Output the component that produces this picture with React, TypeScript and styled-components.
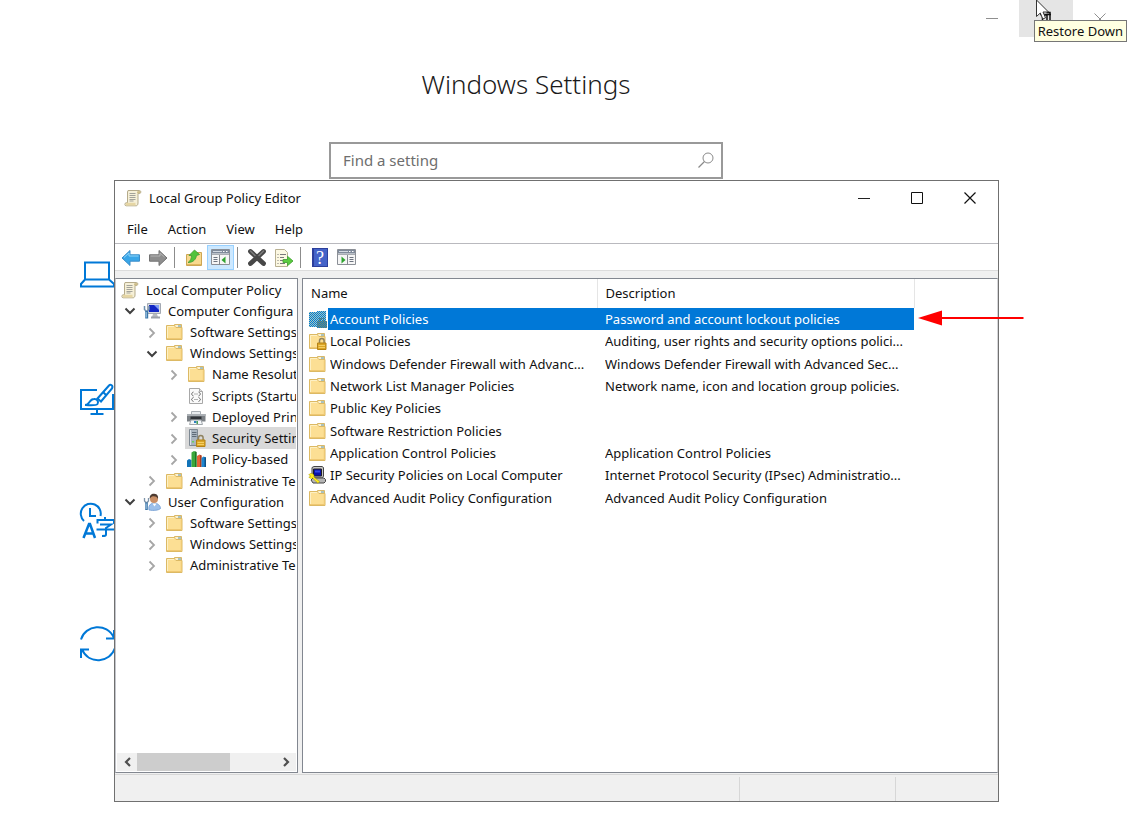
import React from 'react';
import styled, { createGlobalStyle, css } from 'styled-components';

const GlobalStyle = createGlobalStyle`
  *, *::before, *::after { box-sizing: border-box; }
  body {
    margin: 0;
    background: #fff;
    color: #111;
    font-family: 'Noto Sans', 'Open Sans', sans-serif;
    font-size: 13px;
    line-height: 20px;
  }
  button { font: inherit; color: inherit; background: none; border: 0; padding: 0; margin: 0; }
  svg { display: block; flex: none; }
`;

/* ---------- Settings page ---------- */

const Desktop = styled.div`
  position: relative;
  min-height: 100vh;
  overflow: hidden;
`;

const SettingsPage = styled.main`
  display: flex;
  flex-direction: column;
`;

const SettingsCaption = styled.div`
  display: flex;
  justify-content: flex-end;
  height: 37px;
`;

const SettingsCaptionButton = styled.button<{ $hover?: boolean }>`
  position: relative;
  display: flex;
  justify-content: center;
  align-items: center;
  width: 54px;
  color: #8f8f8f;
  background: ${(p) => (p.$hover ? '#e5e5e5' : 'transparent')};
`;

const CursorIcon = styled.svg`
  position: absolute;
  left: 15px;
  top: 0;
`;

const Tooltip = styled.div`
  position: absolute;
  z-index: 3;
  top: 20px;
  right: 0;
  padding: 0 3px;
  border: 1px solid #767676;
  background: #ffffe1;
  white-space: nowrap;
`;

const SettingsHead = styled.header`
  display: flex;
  flex-direction: column;
  align-items: center;
  padding: 28px 75px 0 0;
`;

const SettingsTitle = styled.h1`
  margin: 0;
  font-size: 26px;
  line-height: 38px;
  font-weight: 300;
  color: #1a1a1a;
`;

const SearchBox = styled.label`
  display: flex;
  align-items: center;
  width: 394px;
  height: 37px;
  margin-top: 39px;
  padding: 0 7px 2px 12px;
  border: 2px solid #999;
  color: #8a8a8a;
`;

const SearchInput = styled.input`
  flex: 1;
  min-width: 0;
  border: 0;
  outline: 0;
  padding: 0;
  background: none;
  font: inherit;
  font-size: 15px;
  &::placeholder { color: #6e6e6e; opacity: 1; }
`;

const Categories = styled.nav`
  display: flex;
  flex-direction: column;
  gap: 83px;
  padding: 76px 0 0 78px;
`;

const CategoryLink = styled.a`
  display: block;
  width: 40px;
  height: 40px;
  color: #0078d7;
`;

/* ---------- Policy editor window ---------- */

const EditorWindow = styled.section`
  position: absolute;
  top: 180px;
  right: 128px;
  bottom: 12px;
  left: 114px;
  display: flex;
  flex-direction: column;
  border: 1px solid #707070;
  background: #fff;
`;

const TitleBar = styled.header`
  display: flex;
  align-items: center;
  height: 34px;
  padding: 0 2px 0 9px;
`;

const WindowTitle = styled.h2`
  flex: 1;
  margin: 0 0 0 7px;
  font-size: 13px;
  line-height: 20px;
  font-weight: 400;
`;

const CaptionButton = styled.button`
  display: flex;
  justify-content: center;
  align-items: center;
  width: 53px;
  height: 32px;
`;

const MenuBar = styled.nav`
  display: flex;
  align-items: center;
  gap: 20px;
  height: 28px;
  padding-left: 12px;
`;

const MenuItem = styled.button`
  line-height: 20px;
`;

const Toolbar = styled.div`
  display: flex;
  align-items: flex-end;
  height: 28px;
  padding-left: 2px;
  border-top: 1px solid #b9b9be;
  border-bottom: 1px solid #dcdcdc;
`;

const ToolButton = styled.button<{ $active?: boolean }>`
  display: flex;
  justify-content: center;
  align-items: center;
  width: 27px;
  height: 25px;
  border: 1px solid transparent;
  ${(p) => p.$active && css`
    background: #cce8ff;
    border-color: #99d1ff;
  `}
`;

const ToolSeparator = styled.span`
  width: 1px;
  height: 21px;
  margin: 0 5px 2px 3px;
  background: #8c8c8c;
`;

const Panes = styled.div`
  flex: 1;
  display: flex;
  gap: 4px;
  min-height: 0;
  padding: 7px 0 1px;
  background: #f0f0f0;
`;

const TreePane = styled.div`
  display: flex;
  flex-direction: column;
  flex: none;
  width: 183px;
  overflow: hidden;
  border: 1px solid #828790;
  border-left-color: #c3c5cb;
  background: #fff;
`;

const Tree = styled.ul`
  display: grid;
  grid-template-rows: repeat(14, 1fr);
  height: 297px;
  margin: 0 1px auto 0;
  padding: 0;
  overflow: hidden;
  list-style: none;
`;

const TreeRow = styled.li<{ $level: number }>`
  display: flex;
  align-items: stretch;
  min-width: 0;
  padding-left: ${(p) => (p.$level === 0 ? 3 : p.$level * 22 - 17)}px;
  white-space: nowrap;
`;

const Expander = styled.button`
  display: flex;
  flex: none;
  justify-content: center;
  align-items: center;
  width: 20px;
  padding: 1px 3px 0 0;
`;

const ExpanderSpace = styled.span`
  flex: none;
  width: 20px;
`;

const TreeNode = styled.span<{ $selected?: boolean }>`
  display: flex;
  flex: 1;
  align-items: center;
  gap: 7px;
  min-width: 0;
  padding-left: 2px;
  background: ${(p) => (p.$selected ? '#d9d9d9' : 'transparent')};
`;

const ScrollBar = styled.div`
  display: flex;
  height: 18px;
  margin: 0 1px 1px 1px;
  background: #f0f0f0;
`;

const ScrollButton = styled.button`
  display: flex;
  justify-content: center;
  align-items: center;
  width: 20px;
`;

const ScrollTrack = styled.div`
  flex: 1;
`;

const ScrollThumb = styled.div`
  width: 67%;
  height: 100%;
  background: #cdcdcd;
`;

const ListPane = styled.div`
  flex: 1;
  min-width: 0;
  overflow: hidden;
  border: 1px solid #828790;
  border-right-color: #d5d5d8;
  background: #fff;
`;

const PolicyTable = styled.table`
  table-layout: fixed;
  width: 611px;
  height: 230px;
  border-collapse: collapse;
  border-spacing: 0;
`;

const HeadCell = styled.th`
  height: 29px;
  padding: 0 8px 1px;
  border-right: 1px solid #e5e5e5;
  font-weight: 400;
  text-align: left;
`;

const PolicyRow = styled.tr<{ $selected?: boolean }>`
  color: ${(p) => (p.$selected ? '#fff' : 'inherit')};
`;

const NameCell = styled.td<{ $selected?: boolean }>`
  padding: 0 0 0 5px;
  ${(p) => p.$selected && css`
    background: linear-gradient(#0078d7, #0078d7) 25px 0 no-repeat;
  `}
`;

const NameLine = styled.span`
  display: flex;
  align-items: center;
  gap: 3px;
`;

const CellText = styled.span`
  display: block;
  flex: 1;
  min-width: 0;
  padding-right: 6px;
  overflow: hidden;
  text-overflow: ellipsis;
  white-space: nowrap;
`;

const DescriptionCell = styled.td<{ $selected?: boolean }>`
  padding: 0 0 0 8px;
  background: ${(p) => (p.$selected ? '#0078d7' : 'transparent')};
`;

const StatusBar = styled.footer`
  display: flex;
  justify-content: flex-end;
  height: 27px;
  padding-top: 2px;
  border-top: 1px solid #d7d7d7;
  background: #f0f0f0;
`;

const StatusCell = styled.span<{ $width: number }>`
  width: ${(p) => p.$width}px;
  border-left: 1px solid #d7d7d7;
`;

const Pointer = styled.svg`
  position: absolute;
  z-index: 2;
  left: 918px;
  top: 310px;
`;

/* ---------- Icons ---------- */

const ScrollIcon = () => (
  <svg width="18" height="18" viewBox="0 0 18 18">
    <path d="M4 1.500h11.500c1.500 0 2 2.500.3 3H14v9.500c0 2-1 2.800-2 2.800H2c-1.500 0-1.500-3 0-3h1.500V3z" fill="#f6f0d8" stroke="#b5ab8b" />
    <path d="M2 13.800h9.500v2.700H2z" fill="#e6d6a4" />
    <path d="M13.500 2.200c-.8.8-.6 2 .3 2.300h1.700c1.500-.5 1-2.500 0-2.500z" fill="#cdbd8a" />
    <path d="M5.500 4.500h6M5.500 6.500h6M5.500 8.500h6M5.500 10.500h6M5.500 12h4" stroke="#a3a39b" />
  </svg>
);

const FolderShape = () => (
  <>
    <path d="M9.500 3V1.500h7V5h-7z" fill="#f8e3a6" stroke="#d9b868" />
    <path d="M1.500 2.500h8L11 4.500h6v12H1.500z" fill="#fcdf94" stroke="#dcb964" />
    <path d="M2 15.500h14.500M16.300 5.500v10" stroke="#efc872" />
    <path d="M2.500 3.500v11.500M2.500 3.500h6.500" stroke="#fdf0c4" />
    <path d="M10.500 3h2.500" stroke="#fff" />
    <path d="M13 3h3" stroke="#5aa0d8" />
  </>
);

const LockShape = () => (
  <>
    <path d="M11.500 11V8.800a2.300 2.300 0 0 1 4.600 0V11" fill="none" stroke="#8f8361" strokeWidth="1.500" />
    <path d="M9.500 11h8.500v6.500H9.500z" fill="#dba527" stroke="#b58214" />
    <path d="M10.500 13.500h6.500M10.500 15.500h6.500" stroke="#f4cf63" />
  </>
);

const FolderIcon = () => (
  <svg width="18" height="18" viewBox="0 0 18 18"><FolderShape /></svg>
);

const LockFolderIcon = () => (
  <svg width="19" height="18" viewBox="0 0 19 18"><FolderShape /><LockShape /></svg>
);

const SelectedLockFolderIcon = () => (
  <svg width="19" height="18" viewBox="0 0 19 18" shapeRendering="crispEdges">
    <defs>
      <pattern id="dither" width="2" height="2" patternUnits="userSpaceOnUse">
        <path d="M0 0h1v1H0zM1 1h1v1H1z" fill="#0078d7" />
      </pattern>
    </defs>
    <path d="M1 2h8V1h8.500v15.500H1z" fill="#a5c9bd" />
    <path d="M11 11V8h5v3h2.500v7H9v-7z" fill="#8c8e58" />
    <path d="M12.500 11V9h2v2z" fill="#a5c9bd" />
    <path d="M1 2h8V1h8.500v10h1v7H9v-1.500H1z" fill="url(#dither)" />
  </svg>
);

const ComputerIcon = () => (
  <svg width="19" height="18" viewBox="0 0 19 18">
    <path d="M4.500 1.500h13v10h-13z" fill="#d9dce0" stroke="#a3a9b2" />
    <path d="M6 3h10v7H6z" fill="#1226c4" />
    <path d="M11 3h5v5z" fill="#7e9cf4" />
    <path d="M10 12h4l1 3H9z" fill="#b8bcc2" />
    <path d="M8 15.500h9" stroke="#9ba0a8" strokeWidth="2" />
    <path d="M1.500 4v3.500l1.500 1.500h1.500L6 7.500V4" fill="none" stroke="#6d8fae" strokeWidth="1.500" />
    <path d="M3.700 9v7.500" stroke="#3c76a8" strokeWidth="3" />
    <path d="M3.200 10v5.500" stroke="#a9cdea" />
  </svg>
);

const UserIcon = () => (
  <svg width="19" height="18" viewBox="0 0 19 18">
    <path d="M6 17c-1-4 1.500-7 5-7s6.500 2.500 6.500 5.500c-1.500 1.700-7 2.500-11.500 1.500z" fill="#9cc0ea" stroke="#6f9bd0" strokeWidth=".8" />
    <path d="M9.500 10.500l2 3 2-3z" fill="#fff" />
    <circle cx="11" cy="6" r="4" fill="#c98f66" />
    <path d="M6.800 6c-.5-4 2-5.500 4.500-5.200C14.500 1 15.500 3.500 15 6c-1-2.500-3-3-5-2.800C8.500 3.500 7.500 4.500 6.800 6z" fill="#4d3a30" />
    <path d="M1.500 5v3l1.300 1.500h1.400L5.500 8V5" fill="none" stroke="#7d93a8" strokeWidth="1.300" />
    <path d="M3.500 9.500V17" stroke="#3c76a8" strokeWidth="2.600" />
    <path d="M3.200 10.500V16" stroke="#b9d6ee" strokeWidth=".8" />
  </svg>
);

const ScriptIcon = () => (
  <svg width="18" height="18" viewBox="0 0 18 18">
    <path d="M2.500 1.500h10l3 3v12h-13z" fill="#fafafa" stroke="#a8a8a8" />
    <path d="M12.500 1.500v3h3" fill="#ddd" stroke="#a8a8a8" />
    <path d="M6.500 5c-1.500 0-1 1.800-2 2 1 .2.500 2 2 2M11.500 5c1.500 0 1 1.800 2 2-1 .2-.5 2-2 2M7.500 7h1M9.500 7h1M6.500 10.500c-1.500 0-1 1.800-2 2 1 .2.500 2 2 2M11.500 10.500c1.500 0 1 1.800 2 2-1 .2-.5 2-2 2M7.500 12.500h1M9.500 12.500h1" fill="none" stroke="#5c5c5c" strokeWidth=".9" />
  </svg>
);

const PrinterIcon = () => (
  <svg width="19" height="18" viewBox="0 0 19 18">
    <path d="M4.500 3.500h9V7h-9z" fill="#e9ecef" stroke="#aab0b6" />
    <path d="M0 6h18.500v7.500H0z" fill="#7b8085" />
    <path d="M0 6h18.500v2H0z" fill="#abb0b5" />
    <path d="M3.500 8.500h11v3h-11z" fill="#303439" />
    <path d="M4 12h10l1.500 4.500H2.500z" fill="#f4f7f9" stroke="#a0a6ab" />
    <path d="M7 13h2.500v2H7z" fill="#2f7fc0" />
    <path d="M9.500 13H11v3H9.500z" fill="#4da456" />
  </svg>
);

const SecurityIcon = () => (
  <svg width="19" height="18" viewBox="0 0 19 18">
    <path d="M2.500.5h8v16h-8z" fill="#a9b5c0" stroke="#7d8892" />
    <path d="M3.500 1v15" stroke="#dbe3ea" />
    <path d="M5 3.500h4.500M5 5.500h4.500M5 7.500h4.500" stroke="#5e6b78" />
    <path d="M5 12h2v1.500H5z" fill="#6ccf5e" />
    <LockShape />
  </svg>
);

const BarsIcon = () => (
  <svg width="20" height="18" viewBox="0 0 20 18">
    <path d="M0 10.500l2-1.500 2.500 1v7H0z" fill="#1273b8" />
    <path d="M4.500 2.500L7 1l2.500 1v15h-5z" fill="#3aa73a" />
    <path d="M8 1.500l1.500.5v15H8z" fill="#1f7427" />
    <path d="M10 6l2.500-1.500 2 1V17H10z" fill="#e5633a" />
    <path d="M13 5l1.500.5V17H13z" fill="#a83c1e" />
    <path d="M14.500 8l2-1.500 2.500 1V17h-4.500z" fill="#1d86cf" />
    <path d="M17.500 7l1.500.5V17h-1.500z" fill="#0d4f86" />
  </svg>
);

const IpSecurityIcon = () => (
  <svg width="18" height="18" viewBox="0 0 18 18">
    <path d="M4 1.500L6 .5h8l1.500 1v9l-2 1.500H4z" fill="#c9c9c9" stroke="#444" />
    <path d="M5.500 3h8v7h-8z" fill="#0b12a8" stroke="#222" />
    <path d="M7 4.500h5v2H7z" fill="#3048e8" />
    <path d="M3 14l2-2h11l1.500 1.500v2L16 17H5z" fill="#b5b5b5" stroke="#444" />
    <path d="M.8 8.800c.8-1.500 3-2 4.500-.5 1 1 .8 2 .5 2.700l5.700 4.500-1.500 1.700L4.500 12c-1.500.8-3 .2-3.700-1l2.200-.8z" fill="#ffee1c" stroke="#a89900" strokeWidth=".5" />
  </svg>
);

const ArrowLeftIcon = () => (
  <svg width="20" height="18" viewBox="0 0 20 18">
    <path d="M1 9l8-7.500v4.300h9.500v6.400H9v4.300z" fill="#39a6e8" stroke="#3a8cc8" />
    <path d="M3 8.500L8 4v3h9.500" fill="none" stroke="#8fd4f8" />
  </svg>
);

const ArrowRightIcon = () => (
  <svg width="20" height="18" viewBox="0 0 20 18">
    <path d="M19 9l-8-7.500v4.300H1.500v6.400H11v4.300z" fill="#8e8e8e" stroke="#727272" />
    <path d="M2.500 7H12V4l4.500 4" fill="none" stroke="#b5b5b5" />
  </svg>
);

const UpFolderIcon = () => (
  <svg width="18" height="20" viewBox="0 0 18 20">
    <path d="M1.500 6.500h7L10 4.500h6.500v13h-15z" fill="#f8d98f" stroke="#cda654" />
    <path d="M2 16.500h14" stroke="#e0b65e" />
    <path d="M3 14.500c2.500-1.500 3.500-4 3.500-7H4L9.500 2l5 4.500-3 1C11 11 8.500 14.500 3 14.500z" fill="#52c33c" stroke="#3d9c31" strokeWidth=".8" />
  </svg>
);

const PanelIcon = ({ side }: { side: 'left' | 'right' }) => (
  <svg width="19" height="17" viewBox="0 0 19 17">
    <path d="M.5.500h18v15H.5z" fill="#f6f6f6" stroke="#8b8f96" />
    <path d="M1 1h17v3.500H1z" fill="#7f8a9a" />
    <path d="M2 2.500h9" stroke="#d4dae2" />
    <path d="M12 2.500h1.500M15 2.500h1.500" stroke="#fff" />
    <path d="M1 5.500h17" stroke="#a9adb3" />
    {side === 'left' ? (
      <>
        <path d="M8.500 6v10" stroke="#84888f" />
        <path d="M2.500 8.500h4M2.500 10.500h4M2.500 12.500h4" stroke="#6d7480" />
        <path d="M14.500 7.500v7L10.500 11z" fill="#2fa32f" />
      </>
    ) : (
      <>
        <path d="M10.500 6v10" stroke="#84888f" />
        <path d="M12.500 8.500h4M12.500 10.500h4M12.500 12.500h4" stroke="#6d7480" />
        <path d="M4.500 7.500v7l4-3.500z" fill="#2fa32f" />
      </>
    )}
  </svg>
);

const DeleteIcon = () => (
  <svg width="20" height="19" viewBox="0 0 20 19">
    <path d="M3.500 3.500l13 12M16.500 3.500l-13 12" stroke="#474747" strokeWidth="4.800" strokeLinecap="round" />
    <path d="M3.500 3l4.500 4.500M16.500 3L12 7.500" stroke="#7d7d7d" strokeWidth="1.500" strokeLinecap="round" />
  </svg>
);

const ExportIcon = () => (
  <svg width="20" height="18" viewBox="0 0 20 18">
    <path d="M1.500.500h9l3 3v14h-12z" fill="#fcf8e2" stroke="#b9b193" />
    <path d="M3.500 5.500h1M3.500 8.500h1M3.500 11.500h1M3.500 14.500h1M6 5.500h6M6 8.500h4M6 11.500h3M6 14.500h5" stroke="#7a7a7a" />
    <path d="M9 10.500h4.500V7.300L19 12l-5.500 4.700v-3.200H9z" fill="#5bcb3f" stroke="#46a438" strokeWidth=".9" />
  </svg>
);

const HelpGlyph = styled.span`
  display: flex;
  justify-content: center;
  align-items: center;
  width: 16px;
  height: 19px;
  border: 1px solid #2c3f9c;
  border-left-width: 2px;
  background: #4463c8;
  color: #fff;
  font-family: 'Liberation Serif', serif;
  font-size: 18px;
  line-height: 18px;
`;

const ChevronIcon = ({ open }: { open: boolean }) =>
  open ? (
    <svg width="12" height="8" viewBox="0 0 12 8">
      <path d="M1.500 1.500L6 6l4.500-4.500" fill="none" stroke="#404040" strokeWidth="2" />
    </svg>
  ) : (
    <svg width="8" height="12" viewBox="0 0 8 12">
      <path d="M1.500 1.500L6 6l-4.500 4.500" fill="none" stroke="#a6a6a6" strokeWidth="1.800" />
    </svg>
  );

const ScrollChevron = ({ d }: { d: string }) => (
  <svg width="9" height="10" viewBox="0 0 9 10">
    <path d={d} fill="none" stroke="#505050" strokeWidth="2.200" />
  </svg>
);

const LaptopIcon = () => (
  <svg width="40" height="40" viewBox="0 0 40 40" fill="none" stroke="currentColor" strokeWidth="2">
    <path d="M7 7.500h24v17H7zM7 24.500L3 29v2.500h33V29l-5-4.500" />
  </svg>
);

const PersonalizeIcon = () => (
  <svg width="40" height="40" viewBox="0 0 40 40" fill="none" stroke="currentColor" strokeWidth="2">
    <path d="M19 12H3v19h32V16M19 31v5M12.500 36h13" />
    <path d="M19.500 20.500L31 7.500c1.500-1.500 4.500 0 3 3L23 23.500z" />
    <path d="M7 27c5 0 4-6 9-6 3-.3 5 2.500 3.500 5-1.500 2-6.500 1.500-12.500 1" />
    <path d="M25 14l3.500 3.500" />
  </svg>
);

const LanguageIcon = () => (
  <svg width="40" height="40" viewBox="0 0 40 40" fill="none" stroke="currentColor" strokeWidth="2">
    <path d="M6 20A10 10 0 1 1 22.500 15" />
    <path d="M12 7v8h6" />
    <path d="M5.500 37L11 23h1l5 14M7.500 32.500h8" strokeWidth="2.500" />
    <path d="M27 16v3M19.500 22.500V19H36v3.500M22 23.500h11L28 27v6.500c0 1.500-1 1.500-4 1.500M18.500 28.500H38" />
  </svg>
);

const UpdateIcon = () => (
  <svg width="40" height="40" viewBox="0 0 40 40" fill="none" stroke="currentColor" strokeWidth="2">
    <path d="M3 15.500C7 1 29 -2 36 14M36 6v8.500h-8" />
    <path d="M37 24C32 39 11 41 4 25.500M3 34v-8.500h8" />
  </svg>
);

/* ---------- Data ---------- */

type TreeItem = {
  label: string;
  level: number;
  icon: React.ReactNode;
  open?: boolean;
  leaf?: boolean;
  selected?: boolean;
};

const treeItems: TreeItem[] = [
  { label: 'Local Computer Policy', level: 0, icon: <ScrollIcon />, leaf: true },
  { label: 'Computer Configura', level: 1, icon: <ComputerIcon />, open: true },
  { label: 'Software Settings', level: 2, icon: <FolderIcon /> },
  { label: 'Windows Settings', level: 2, icon: <FolderIcon />, open: true },
  { label: 'Name Resolut', level: 3, icon: <FolderIcon /> },
  { label: 'Scripts (Startu', level: 3, icon: <ScriptIcon />, leaf: true },
  { label: 'Deployed Prin', level: 3, icon: <PrinterIcon /> },
  { label: 'Security Settin', level: 3, icon: <SecurityIcon />, selected: true },
  { label: 'Policy-based', level: 3, icon: <BarsIcon /> },
  { label: 'Administrative Te', level: 2, icon: <FolderIcon /> },
  { label: 'User Configuration', level: 1, icon: <UserIcon />, open: true },
  { label: 'Software Settings', level: 2, icon: <FolderIcon /> },
  { label: 'Windows Settings', level: 2, icon: <FolderIcon /> },
  { label: 'Administrative Te', level: 2, icon: <FolderIcon /> },
];

const policies: { name: string; description: string; icon: React.ReactNode; selected?: boolean }[] = [
  { name: 'Account Policies', description: 'Password and account lockout policies', icon: <SelectedLockFolderIcon />, selected: true },
  { name: 'Local Policies', description: 'Auditing, user rights and security options polici...', icon: <LockFolderIcon /> },
  { name: 'Windows Defender Firewall with Advanc...', description: 'Windows Defender Firewall with Advanced Sec...', icon: <FolderIcon /> },
  { name: 'Network List Manager Policies', description: 'Network name, icon and location group policies.', icon: <FolderIcon /> },
  { name: 'Public Key Policies', description: '', icon: <FolderIcon /> },
  { name: 'Software Restriction Policies', description: '', icon: <FolderIcon /> },
  { name: 'Application Control Policies', description: 'Application Control Policies', icon: <FolderIcon /> },
  { name: 'IP Security Policies on Local Computer', description: 'Internet Protocol Security (IPsec) Administratio...', icon: <IpSecurityIcon /> },
  { name: 'Advanced Audit Policy Configuration', description: 'Advanced Audit Policy Configuration', icon: <FolderIcon /> },
];

const NameIcon = styled.span`
  display: flex;
  flex: none;
  width: 19px;
`;

const IconSlot = styled.span`
  display: flex;
  flex: none;
  width: 18px;
`;

/* ---------- App ---------- */

export default function App() {
  return (
    <Desktop>
      <GlobalStyle />
      <SettingsPage>
        <SettingsCaption>
          <SettingsCaptionButton aria-label="Minimize settings">
            <svg width="12" height="12" viewBox="0 0 12 12"><path d="M0 5.500h12" stroke="currentColor" /></svg>
          </SettingsCaptionButton>
          <SettingsCaptionButton $hover aria-label="Restore settings">
            <CursorIcon width="20" height="24" viewBox="0 0 20 24">
              <path d="M6 14.500h11M8.500 20v-4.500M12.500 12.500h3.500v8M9.500 15h3.500v5" fill="none" stroke="#111" strokeWidth="1.500" />
              <path d="M2.500 0v16.500l3.800-3.500 2.500 6 2.700-1.200L9 12h5.500z" fill="#fff" stroke="#333" />
            </CursorIcon>
          </SettingsCaptionButton>
          <SettingsCaptionButton aria-label="Close settings">
            <svg width="12" height="12" viewBox="0 0 12 12"><path d="M.5.500l11 11M11.500.500l-11 11" stroke="currentColor" /></svg>
          </SettingsCaptionButton>
        </SettingsCaption>
        <SettingsHead>
          <SettingsTitle>Windows Settings</SettingsTitle>
          <SearchBox>
            <SearchInput type="text" placeholder="Find a setting" aria-label="Find a setting" />
            <svg width="16" height="16" viewBox="0 0 16 16" fill="none" stroke="currentColor">
              <circle cx="10" cy="6" r="5" />
              <path d="M6.500 9.500L.5 15.500" strokeWidth="1.300" />
            </svg>
          </SearchBox>
        </SettingsHead>
        <Categories aria-label="Settings categories">
          <CategoryLink href="#system" aria-label="System"><LaptopIcon /></CategoryLink>
          <CategoryLink href="#personalization" aria-label="Personalization"><PersonalizeIcon /></CategoryLink>
          <CategoryLink href="#language" aria-label="Time and language"><LanguageIcon /></CategoryLink>
          <CategoryLink href="#update" aria-label="Update"><UpdateIcon /></CategoryLink>
        </Categories>
      </SettingsPage>
      <Tooltip role="tooltip">Restore Down</Tooltip>

      <EditorWindow aria-label="Local Group Policy Editor">
        <TitleBar>
          <ScrollIcon />
          <WindowTitle>Local Group Policy Editor</WindowTitle>
          <CaptionButton aria-label="Minimize">
            <svg width="12" height="12" viewBox="0 0 12 12"><path d="M0 6.500h12" stroke="#222" /></svg>
          </CaptionButton>
          <CaptionButton aria-label="Maximize">
            <svg width="12" height="12" viewBox="0 0 12 12"><path d="M.5.500h11v11H.5z" fill="none" stroke="#111" /></svg>
          </CaptionButton>
          <CaptionButton aria-label="Close">
            <svg width="12" height="12" viewBox="0 0 12 12"><path d="M.5.500l11 11M11.500.500l-11 11" stroke="#111" strokeWidth="1.200" /></svg>
          </CaptionButton>
        </TitleBar>
        <MenuBar aria-label="Menu">
          {['File', 'Action', 'View', 'Help'].map((item) => (
            <MenuItem key={item}>{item}</MenuItem>
          ))}
        </MenuBar>
        <Toolbar role="toolbar">
          <ToolButton aria-label="Back"><ArrowLeftIcon /></ToolButton>
          <ToolButton aria-label="Forward"><ArrowRightIcon /></ToolButton>
          <ToolSeparator />
          <ToolButton aria-label="Up one level"><UpFolderIcon /></ToolButton>
          <ToolButton $active aria-label="Show console tree"><PanelIcon side="left" /></ToolButton>
          <ToolSeparator />
          <ToolButton aria-label="Delete"><DeleteIcon /></ToolButton>
          <ToolButton aria-label="Export list"><ExportIcon /></ToolButton>
          <ToolSeparator />
          <ToolButton aria-label="Help"><HelpGlyph>?</HelpGlyph></ToolButton>
          <ToolButton aria-label="Show action pane"><PanelIcon side="right" /></ToolButton>
        </Toolbar>
        <Panes>
          <TreePane>
            <Tree role="tree">
              {treeItems.map((item, i) => (
                <TreeRow key={i} $level={item.level} role="treeitem" aria-selected={!!item.selected}>
                  {item.level > 0 &&
                    (item.leaf ? (
                      <ExpanderSpace />
                    ) : (
                      <Expander aria-label={`Toggle ${item.label}`}><ChevronIcon open={!!item.open} /></Expander>
                    ))}
                  <TreeNode $selected={item.selected}>
                    <IconSlot>{item.icon}</IconSlot>
                    {item.label}
                  </TreeNode>
                </TreeRow>
              ))}
            </Tree>
            <ScrollBar>
              <ScrollButton aria-label="Scroll left"><ScrollChevron d="M7 1L3 5l4 4" /></ScrollButton>
              <ScrollTrack><ScrollThumb /></ScrollTrack>
              <ScrollButton aria-label="Scroll right"><ScrollChevron d="M2 1l4 4-4 4" /></ScrollButton>
            </ScrollBar>
          </TreePane>
          <ListPane>
            <PolicyTable>
              <colgroup>
                <col style={{ width: 294 }} />
                <col style={{ width: 317 }} />
              </colgroup>
              <thead>
                <tr>
                  <HeadCell scope="col">Name</HeadCell>
                  <HeadCell scope="col">Description</HeadCell>
                </tr>
              </thead>
              <tbody>
                {policies.map((p) => (
                  <PolicyRow key={p.name} $selected={p.selected}>
                    <NameCell $selected={p.selected}>
                      <NameLine>
                        <NameIcon>{p.icon}</NameIcon>
                        <CellText>{p.name}</CellText>
                      </NameLine>
                    </NameCell>
                    <DescriptionCell $selected={p.selected}>
                      <CellText>{p.description}</CellText>
                    </DescriptionCell>
                  </PolicyRow>
                ))}
              </tbody>
            </PolicyTable>
          </ListPane>
        </Panes>
        <StatusBar>
          <StatusCell $width={156} />
          <StatusCell $width={103} />
        </StatusBar>
      </EditorWindow>

      <Pointer width="106" height="16" viewBox="0 0 106 16">
        <path d="M22 8h83.500" stroke="#f00" strokeWidth="2" />
        <path d="M0 8L24 .5v15z" fill="#f00" />
      </Pointer>
    </Desktop>
  );
}
